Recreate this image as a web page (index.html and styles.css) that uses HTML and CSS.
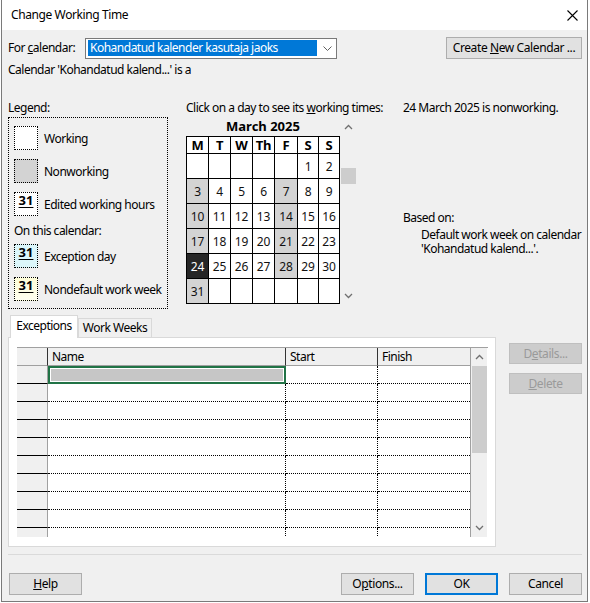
FILE: index.html
```html
<!DOCTYPE html>
<html>
<head>
<meta charset="utf-8">
<link rel="stylesheet" href="styles.css">
</head>
<body>
<div class="dialog">
  <div class="titlebar">
    <span class="title">Change Working Time</span>
    <svg class="close" width="11" height="11" viewBox="0 0 11 11"><path d="M0.5 0.5 L10.5 10.5 M10.5 0.5 L0.5 10.5" stroke="#000" stroke-width="1.1" fill="none"/></svg>
  </div>
  <div class="content">
    <div class="row-cal">
      <span class="lbl">For <u>c</u>alendar:</span>
      <div class="select">
        <span class="sel-text">Kohandatud kalender kasutaja jaoks</span>
        <svg class="sel-arrow" width="9" height="5" viewBox="0 0 9 5"><path d="M0.5 0.5 L4.5 4.5 L8.5 0.5" stroke="#606060" stroke-width="1" fill="none"/></svg>
      </div>
      <button class="btn btn-create">Create <u>N</u>ew Calendar ...</button>
    </div>
    <div class="cal-note">Calendar 'Kohandatud kalend...' is a</div>

    <div class="main">
      <div class="legend-col">
        <div class="line">Legend:</div>
        <div class="legend-box">
          <div class="item"><span class="sw sw-work"></span><span>Working</span></div>
          <div class="item"><span class="sw sw-non"></span><span>Nonworking</span></div>
          <div class="item"><span class="sw sw-edit"><u>31</u></span><span>Edited working hours</span></div>
          <div class="line sub">On this calendar:</div>
          <div class="item"><span class="sw sw-exc"><u>31</u></span><span>Exception day</span></div>
          <div class="item"><span class="sw sw-nd"><u>31</u></span><span>Nondefault work week</span></div>
        </div>
      </div>

      <div class="month-col">
        <div class="line">Click on a day to see its <u>w</u>orking times:</div>
        <div class="cal-wrap">
          <div class="cal-block">
            <div class="month-title">March 2025</div>
            <div class="cal-grid">
              <div class="hd">M</div><div class="hd">T</div><div class="hd">W</div><div class="hd">Th</div><div class="hd">F</div><div class="hd">S</div><div class="hd">S</div>
              <div></div><div></div><div></div><div></div><div></div><div>1</div><div>2</div>
              <div class="nw">3</div><div>4</div><div>5</div><div>6</div><div class="nw">7</div><div>8</div><div>9</div>
              <div class="nw">10</div><div>11</div><div>12</div><div>13</div><div class="nw">14</div><div>15</div><div>16</div>
              <div class="nw">17</div><div>18</div><div>19</div><div>20</div><div class="nw">21</div><div>22</div><div>23</div>
              <div class="sel">24</div><div>25</div><div>26</div><div>27</div><div class="nw">28</div><div>29</div><div>30</div>
              <div class="nw">31</div><div></div><div></div><div></div><div></div><div></div><div></div>
            </div>
          </div>
          <div class="cal-scroll">
            <svg class="chev up" width="9" height="6" viewBox="0 0 9 6"><path d="M1 5 L4.5 1.5 L8 5" stroke="#707070" stroke-width="1.3" fill="none"/></svg>
            <div class="cal-thumb"></div>
            <svg class="chev down" width="9" height="6" viewBox="0 0 9 6"><path d="M1 1 L4.5 4.5 L8 1" stroke="#707070" stroke-width="1.3" fill="none"/></svg>
          </div>
        </div>
      </div>

      <div class="info-col">
        <div class="line">24 March 2025 is nonworking.</div>
        <div class="line based">Based on:</div>
        <div class="based-text">Default work week on calendar<br>'Kohandatud kalend...'.</div>
      </div>
    </div>

    <div class="lower">
      <div class="tabs-area">
        <div class="tabs">
          <div class="tab active">Exceptions</div>
          <div class="tab">Work Weeks</div>
        </div>
        <div class="panel">
          <div class="xtable">
            <div class="xbody">
              <div class="xrow xhead">
                <div class="c rh"></div><div class="c name">Name</div><div class="c start">Start</div><div class="c fin">Finish</div>
              </div>
              <div class="xrow"><div class="c rh"></div><div class="c name cur"><span class="cur-fill"></span></div><div class="c start"></div><div class="c fin"></div></div>
              <div class="xrow"><div class="c rh"></div><div class="c name"></div><div class="c start"></div><div class="c fin"></div></div>
              <div class="xrow"><div class="c rh"></div><div class="c name"></div><div class="c start"></div><div class="c fin"></div></div>
              <div class="xrow"><div class="c rh"></div><div class="c name"></div><div class="c start"></div><div class="c fin"></div></div>
              <div class="xrow"><div class="c rh"></div><div class="c name"></div><div class="c start"></div><div class="c fin"></div></div>
              <div class="xrow"><div class="c rh"></div><div class="c name"></div><div class="c start"></div><div class="c fin"></div></div>
              <div class="xrow"><div class="c rh"></div><div class="c name"></div><div class="c start"></div><div class="c fin"></div></div>
              <div class="xrow"><div class="c rh"></div><div class="c name"></div><div class="c start"></div><div class="c fin"></div></div>
              <div class="xrow"><div class="c rh"></div><div class="c name"></div><div class="c start"></div><div class="c fin"></div></div>
              <div class="xrow"><div class="c rh"></div><div class="c name"></div><div class="c start"></div><div class="c fin"></div></div>
            </div>
            <div class="xscroll">
              <svg class="chev" width="9" height="6" viewBox="0 0 9 6"><path d="M1 5 L4.5 1.5 L8 5" stroke="#707070" stroke-width="1.3" fill="none"/></svg>
              <div class="xthumb"></div>
              <div class="xtrack"></div>
              <svg class="chev" width="9" height="6" viewBox="0 0 9 6"><path d="M1 1 L4.5 4.5 L8 1" stroke="#707070" stroke-width="1.3" fill="none"/></svg>
            </div>
          </div>
        </div>
      </div>
      <div class="side-btns">
        <button class="btn dis">D<u>e</u>tails...</button>
        <button class="btn dis"><u>D</u>elete</button>
      </div>
    </div>

    <div class="sep"></div>

    <div class="footer">
      <button class="btn help"><u>H</u>elp</button>
      <button class="btn opt">O<u>p</u>tions...</button>
      <button class="btn ok">OK</button>
      <button class="btn cancel">Cancel</button>
    </div>
  </div>
</div>
</body>
</html>
```

FILE: styles.css
```css
* { box-sizing: border-box; }
html, body { margin: 0; padding: 0; }
body {
  width: 590px;
  height: 603px;
  overflow: hidden;
  background: #fff;
  font-family: "Segoe UI", "Noto Sans", sans-serif;
  font-size: 12px;
  letter-spacing: -0.5px;
  color: #000;
}
u { text-decoration: underline; text-underline-offset: 1px; }

.dialog {
  margin-left: 1px;
  width: 587px;
  height: 602px;
  border: 1px solid #7a7a7a;
  border-top: 0;
  background: #f0f0f0;
  display: flex;
  flex-direction: column;
}
.titlebar {
  height: 30px;
  flex: none;
  background: #fff;
  display: flex;
  align-items: center;
  justify-content: space-between;
  padding: 0 9px 0 9px;
}
.title { font-size: 12px; line-height: 16px; letter-spacing: -0.4px; }
.close { display: block; }

.content {
  flex: 1;
  display: flex;
  flex-direction: column;
  padding: 7px 5px 0 6px;
}
.line { line-height: 16px; height: 16px; white-space: nowrap; }

.row-cal { display: flex; align-items: center; height: 22px; }
.lbl { width: 77px; line-height: 16px; }
.select {
  width: 252px;
  height: 21px;
  background: #fff;
  border: 1px solid #7a7a7a;
  padding: 1px 2px;
  display: flex;
  align-items: center;
}
.sel-text {
  width: 229px;
  height: 16px;
  line-height: 16px;
  background: #0078d7;
  color: #fff;
  padding-left: 2px;
  white-space: nowrap;
}
.sel-arrow { margin-left: 6px; }

.btn {
  font-family: inherit;
  font-size: 12px;
  letter-spacing: -0.4px;
  color: #000;
  background: #e1e1e1;
  border: 1px solid #adadad;
  padding: 0;
  height: 22px;
  width: 73px;
  line-height: 18px;
  text-align: center;
}
.btn-create { margin-left: auto; width: 136px; }

.cal-note { margin-top: 3px; line-height: 16px; }

.main { display: flex; align-items: flex-start; margin-top: 22px; height: 209px; }

.legend-col { width: 160px; flex: none; }
.legend-box {
  margin-top: 1px;
  border: 1px dotted #000;
  padding: 8px 5px 7px 5px;
  display: flex;
  flex-direction: column;
  gap: 9px;
  height: 192px;
}
.legend-box .sub { margin-top: -2px; margin-bottom: -4px; }
.item { display: flex; align-items: center; height: 24px; gap: 6px; white-space: nowrap; }
.sw {
  width: 24px;
  height: 24px;
  flex: none;
  border: 1px dotted #000;
  background: #fff;
  font-weight: bold;
  font-size: 13px;
  letter-spacing: 0;
  line-height: 15px;
  text-align: center;
  font-family: "Noto Sans", sans-serif;
}
.sw u { text-underline-offset: 2px; text-decoration-thickness: 1px; }
.sw-non { background: #d3d3d3; }
.sw-exc { background: #dbf6fa; }
.sw-nd { background: linear-gradient(#fdfdd6, #fffff0); }

.month-col { width: 217px; flex: none; margin-left: 18px; }
.cal-wrap { display: flex; margin-top: 2px; }
.cal-block { width: 154px; }
.month-title { text-align: center; font-weight: bold; font-size: 13px; letter-spacing: 0; line-height: 16px; height: 16px; margin-bottom: 2px; }
.cal-grid {
  display: grid;
  grid-template-columns: 21px 21px 21px 21px 22px 20px 20px;
  grid-template-rows: 16px repeat(6, 24px);
  gap: 1px;
  background: #000;
  border: 1px solid #000;
  width: 154px;
}
.cal-grid > div {
  background: #fff;
  display: flex;
  align-items: center;
  justify-content: center;
  font-size: 12px;
  letter-spacing: -0.2px;
  color: #111;
}
.cal-grid > .hd { font-weight: bold; font-size: 13px; color: #000; letter-spacing: -0.3px; }
.cal-grid > .nw { background: #d3d3d3; }
.cal-grid > .sel { background: #262626; color: #fff; }

.cal-scroll {
  width: 16px;
  height: 186px;
  display: flex;
  flex-direction: column;
  align-items: center;
  padding-left: 1px;
}
.cal-scroll .up { margin-top: 6px; }
.cal-thumb { width: 15px; height: 16px; background: #cdcdcd; margin-top: 38px; }
.cal-scroll .down { margin-top: auto; margin-bottom: 5px; }

.info-col { flex: 1; white-space: nowrap; margin-right: -5px; }
.based { margin-top: 94px; }
.based-text { padding-left: 18px; line-height: 14px; margin-top: 2px; }

.lower { display: flex; margin-top: 6px; }
.tabs-area { width: 488px; flex: none; display: flex; flex-direction: column; }
.tabs { display: flex; height: 22px; align-items: flex-end; padding-left: 2px; }
.tab {
  height: 19px;
  width: 74px;
  background: #f0f0f0;
  border: 1px solid #d9d9d9;
  border-bottom: 0;
  text-align: center;
  line-height: 18px;
  white-space: nowrap;
}
.tab.active {
  height: 23px;
  width: 68px;
  background: #fff;
  margin-bottom: -1px;
  position: relative;
  z-index: 1;
  line-height: 20px;
}
.panel {
  height: 210px;
  background: #fff;
  border: 1px solid #d9d9d9;
  padding: 9px 7px 0 8px;
}
.xtable {
  display: flex;
  height: 190px;
  border-top: 1px solid #a0a0a0;
  overflow: hidden;
}
.xbody { width: 453px; flex: none; }
.xrow { display: flex; height: 18px; }
.c { height: 18px; border-bottom: 1px dotted #000; }
.c.rh { width: 31px; background: #f0f0f0; border-right: 1px solid #a0a0a0; border-bottom: 1px solid #000; }
.c.name { width: 238px; border-right: 1px dotted #000; }
.c.start { width: 92px; border-right: 1px dotted #000; }
.c.fin { width: 92px; }
.xhead .c { background: #f0f0f0; border-bottom: 1px solid #a0a0a0; line-height: 18px; padding-left: 4px; }
.xhead .c.rh { border-right: 1px solid #333; }
.xhead .c.name, .xhead .c.start { border-right: 1px solid #333; }
.c.cur { border: 2px solid #217346; padding: 1px; }
.cur-fill { display: block; height: 100%; background: #c6c6c6; }

.xscroll {
  width: 17px;
  flex: none;
  border-left: 1px solid #a0a0a0;
  background: #f0f0f0;
  display: flex;
  flex-direction: column;
  align-items: center;
}
.xscroll .chev { margin-top: 6px; margin-bottom: 6px; flex: none; }
.xthumb { width: 15px; height: 87px; background: #cdcdcd; flex: none; }
.xtrack { flex: 1; }

.side-btns { margin-left: 13px; padding-top: 28px; display: flex; flex-direction: column; gap: 9px; }
.btn.dis { background: #cccccc; border-color: #bfbfbf; color: #9a9a9a; height: 21px; }

.sep { height: 1px; background: #dadada; margin-top: 7px; }

.footer { display: flex; margin-top: 18px; }
.help { margin-left: 1px; }
.opt { margin-left: auto; }
.ok { margin-left: 11px; border: 2px solid #0078d7; line-height: 18px; }
.cancel { margin-left: 11px; }
```
